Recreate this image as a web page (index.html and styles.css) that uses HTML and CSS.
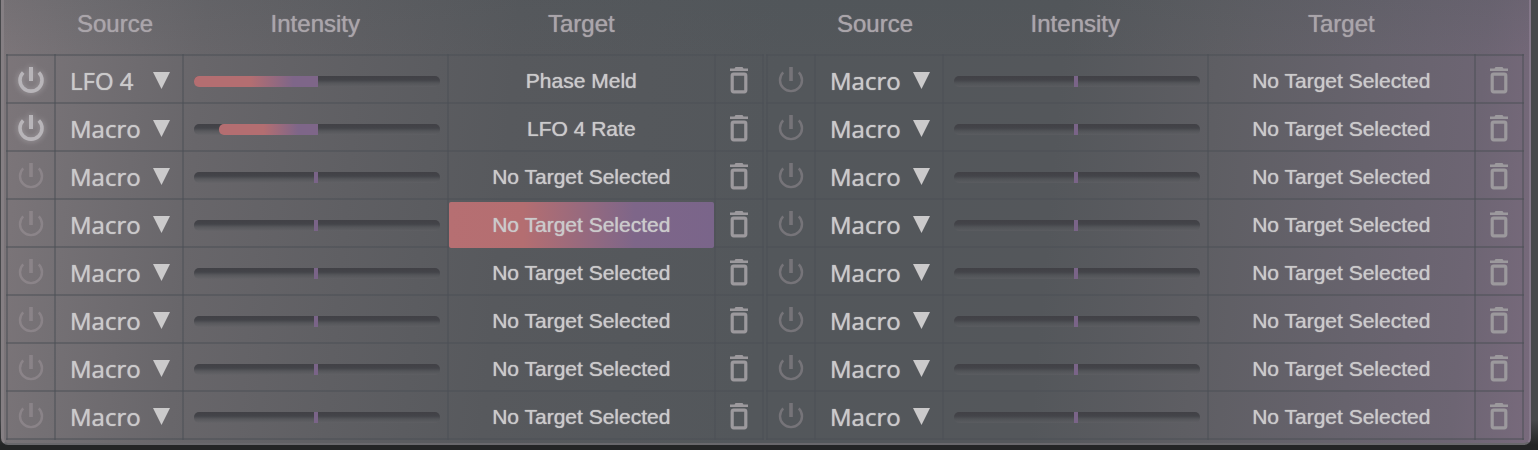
FILE: index.html
```
<!DOCTYPE html>
<html lang="en">
<head>
<meta charset="utf-8">
<title>Modulation matrix</title>
<link rel="stylesheet" href="styles.css">
</head>
<body>
<svg class="defs" aria-hidden="true">
  <symbol id="power" viewBox="0 0 32 32">
    <path d="M8.2 7.4a11 11 0 1 0 15.6 0" fill="none" stroke="currentColor" stroke-width="2.4"/>
    <path d="M16 2v14" fill="none" stroke="currentColor" stroke-width="3.6"/>
  </symbol>
  <symbol id="power-on" viewBox="0 0 32 32">
    <path d="M8.2 7.400a11 11 0 1 0 15.600 0" fill="none" stroke="currentColor" stroke-width="3.600"/>
    <path d="M16 2v14" fill="none" stroke="currentColor" stroke-width="4"/>
  </symbol>
  <symbol id="trash" viewBox="0 0 18 28">
    <path d="M0 1.500h4.500L5.500 0h7l1 1.500H18V4H0z" fill="currentColor"/>
    <rect x="2.200" y="7.200" width="13.600" height="17.600" rx="1.500" fill="none" stroke="currentColor" stroke-width="3.200"/>
  </symbol>
  <symbol id="arrow" viewBox="0 0 17 17">
    <path d="M0 0h17L8.500 17z" fill="currentColor"/>
  </symbol>
</svg>
<main class="panel" id="matrix"></main>
<script src="matrix.js"></script>
</body>
</html>
```
FILE: styles.css
```
* {
  box-sizing: border-box;
}

body {
  margin: 0;
  min-height: 100vh;
  padding: 0 7px 0 1px;
  background: linear-gradient(#47484b 0, #47484b 420px, #242526 445px);
  color: #cbcacb;
  font-family: "Liberation Sans", Arial, sans-serif;
}

.defs {
  display: none;
}

.panel {
  display: flex;
  gap: 2px;
  padding: 0 5px 3px 2px;
  border: solid #69686c;
  border-width: 0 2px 2px 3px;
  border-left-color: #857f83;
  border-right-color: #85788a;
  border-radius: 0 0 7px 7px;
  background:
    linear-gradient(rgba(70, 80, 84, 0.15), transparent 60px),
    linear-gradient(95deg, #7d767a 0, #747074 5%, #68666a 13%, #5f5f63 23%, #57595d 33%, #53575b 50%, #54575b 68%, #5e5e63 78%, #67636d 88%, #6d6573 95%, #786a7c 100%);
}

.matrix {
  flex: 1;
  min-width: 0;
  table-layout: fixed;
  border-collapse: collapse;
}

.col-icon {
  width: 48px;
}

.col-source {
  width: 128px;
}

.col-intensity {
  width: 35%;
}

th {
  height: 55px;
  padding: 0 0 6px;
  color: #aaa5aa;
  font-size: 24px;
  font-weight: 400;
  line-height: 28px;
  text-shadow: 0 0 1px currentColor;
}

.head-source {
  padding-right: 8px;
}

td {
  height: 48px;
  padding: 0;
  border: 2px solid rgba(76, 80, 85, 0.5);
}

button,
select {
  display: block;
  width: 100%;
  height: 46px;
  margin: 0;
  padding: 0;
  border: 0;
  background: none;
  color: inherit;
  cursor: pointer;
}

.power {
  padding-top: 4px;
  color: #aaa0a6;
  opacity: 0.4;
}

.power svg {
  display: block;
  width: 32px;
  height: 32px;
  margin: 0 auto;
}

.power.on {
  color: #b8b5b9;
  opacity: 1;
  filter: drop-shadow(0 0 3px #aaa5a9);
}

.trash {
  color: #9c999d;
}

.trash svg {
  display: block;
  width: 18px;
  height: 28px;
  margin: 4px auto 0;
}

.source {
  display: grid;
  align-items: center;
}

.source select,
.source svg {
  grid-area: 1 / 1;
}

.source select {
  appearance: none;
  padding: 2px 0 0 14px;
  font-family: "Open Sans", "Noto Sans", sans-serif;
  font-size: 24px;
  text-shadow: 0 0 1px currentColor;
}

.source svg {
  justify-self: end;
  width: 17px;
  height: 17px;
  margin: 3px 12px 0 0;
  pointer-events: none;
}

.intensity {
  display: grid;
  margin: 5px 7px 0 10px;
}

.intensity input,
.fill {
  grid-area: 1 / 1;
}

.intensity input {
  appearance: none;
  width: 100%;
  height: 11px;
  margin: 0;
  border-radius: 5px;
  background: linear-gradient(#414146 0, #434449 4px, rgba(78, 80, 84, 0.6) 7px, rgba(100, 100, 104, 0.4) 11px);
}

.intensity input::-webkit-slider-thumb {
  appearance: none;
  width: 4px;
  height: 11px;
  background: transparent;
}

.fill {
  height: 11px;
  border-radius: 5px 0 0 5px;
  background: linear-gradient(90deg, #b46e71 0, #b46e71 45%, #7e6689 80%);
  pointer-events: none;
}

.fill.zero {
  border-radius: 0;
  background: #7a6488;
}

.target {
  padding-top: 3px;
  font-family: inherit;
  font-size: 21px;
  text-shadow: 0 0 1px currentColor;
}

.target.selected {
  position: relative;
  margin: 2px 0 -2px;
  padding: 0;
  border-radius: 2px;
  background: linear-gradient(90deg, #b66f72 0, #b46e71 28%, #7e6689 70%, #7a658a 100%);
}
```
FILE: matrix.js
```
const slots = [
  [
    { source: "LFO 4", amount: -100, target: "Phase Meld", on: true },
    { source: "Macro", amount: -80, target: "LFO 4 Rate", on: true },
    {}, { selected: true }, {}, {}, {}, {}
  ],
  [{}, {}, {}, {}, {}, {}, {}, {}]
];

const icon = (name) => `<svg aria-hidden="true"><use href="#${name}"/></svg>`;

function row(slot, label) {
  const { source = "Macro", amount = 0, target = "No Target Selected", on = false, selected = false } = slot;
  const options = ["Macro", "LFO 4"]
    .map((name) => `<option${name === source ? " selected" : ""}>${name}</option>`)
    .join("");
  const start = amount ? 50 + amount / 2 : 49;
  const width = 50.6 - start;
  return `<tr>
    <td><button class="power${on ? " on" : ""}" aria-label="Enable ${label}" aria-pressed="${on}">${icon(on ? "power-on" : "power")}</button></td>
    <td><div class="source"><select aria-label="Source ${label}">${options}</select>${icon("arrow")}</div></td>
    <td><div class="intensity"><input type="range" min="-100" max="100" value="${amount}" aria-label="Intensity ${label}"><span class="fill${amount ? "" : " zero"}" style="margin-left:${start}%;width:${width}%"></span></div></td>
    <td><button class="target${selected ? " selected" : ""}">${target}</button></td>
    <td><button class="trash" aria-label="Clear ${label}">${icon("trash")}</button></td>
  </tr>`;
}

document.getElementById("matrix").innerHTML = slots
  .map((group, g) => `<table class="matrix">
    <colgroup><col class="col-icon"><col class="col-source"><col class="col-intensity"><col><col class="col-icon"></colgroup>
    <thead><tr><th></th><th class="head-source">Source</th><th>Intensity</th><th>Target</th><th></th></tr></thead>
    <tbody>${group.map((slot, i) => row(slot, `slot ${g * 8 + i + 1}`)).join("")}</tbody>
  </table>`)
  .join("");
```
